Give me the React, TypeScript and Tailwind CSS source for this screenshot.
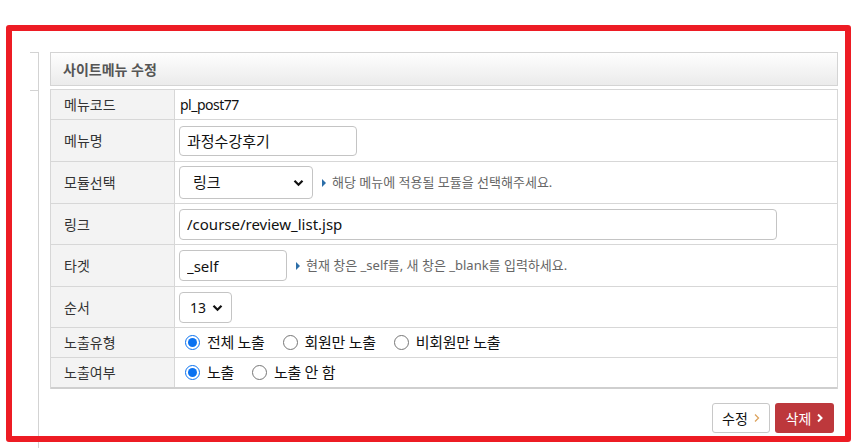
import React from 'react';

const font = { fontFamily: '"Noto Sans", "Noto Sans CJK KR", sans-serif' };

const Chevron = () => (
  <svg width="11" height="8" viewBox="0 0 11 8" className="pointer-events-none">
    <path d="M1.5 1.8 L5.5 5.8 L9.5 1.8" fill="none" stroke="#111" strokeWidth="2.2" />
  </svg>
);

const Arrow = ({ color, w }: { color: string; w: number }) => (
  <svg width="6" height="10" viewBox="0 0 6 10" className="ml-[6px]">
    <path d="M1 1.5 L4.5 5 L1 8.5" fill="none" stroke={color} strokeWidth={w} />
  </svg>
);

const Hint = ({ children }: { children: React.ReactNode }) => (
  <span className="ml-[9px] flex items-center text-[13px] text-[#666]">
    <svg width="4" height="8" viewBox="0 0 4 8" className="mr-[6px]">
      <path d="M0 0 L4 4 L0 8 Z" fill="#2c6ea8" />
    </svg>
    {children}
  </span>
);

const Row = ({ label, h, last, children }: { label: string; h: string; last?: boolean; children: React.ReactNode }) => (
  <div className={`flex ${h} ${last ? 'border-b-2 border-[#cfcfcf]' : 'border-b border-[#d7d7d7]'}`}>
    <div className="w-[124px] shrink-0 bg-[#f3f3f3] border-r border-[#d7d7d7] pl-[13px] flex items-center text-[14px] text-[#333]">
      {label}
    </div>
    <div className="flex-1 pl-[4px] flex items-center text-[14px] text-[#111]">{children}</div>
  </div>
);

const Radio = ({ name, label, checked }: { name: string; label: string; checked?: boolean }) => (
  <label className="flex items-center mr-[18px]">
    <input type="radio" name={name} defaultChecked={checked} className="w-[15px] h-[15px] m-0 accent-[#0b72f0]" />
    <span className="ml-[7px] text-[15px] tracking-[-0.3px]">{label}</span>
  </label>
);

const App: React.FC = () => {
  return (
    <div className="relative w-[857px] h-[448px] bg-white overflow-hidden" style={font}>
      <div className="flex h-full pt-[52px]">
        {/* left nav remnants */}
        <div className="w-[39px] shrink-0 border-r border-[#d3d3d3]">
          <div className="ml-[30px] h-[39px] border-y border-[#d3d3d3]" />
        </div>

        {/* main */}
        <div className="ml-[11px] w-[788px] flex flex-col">
          <div className="h-[34px] border border-[#d4d4d4] bg-gradient-to-b from-[#fefefe] to-[#ebebeb] flex items-center pl-[12px] text-[14px] font-bold text-[#555]">
            사이트메뉴 수정
          </div>

          <div className="mt-[3px] border-t border-x border-[#d7d7d7]">
            <Row label="메뉴코드" h="h-[30px]">
              <span className="ml-[1px] text-[#111] tracking-[-0.5px]">pl_post77</span>
            </Row>
            <Row label="메뉴명" h="h-[42px]">
              <input
                defaultValue="과정수강후기"
                className="w-[178px] h-[30px] border border-[#c4c4c4] rounded-[4px] px-[7px] text-[15px] text-[#111] outline-none"
              />
            </Row>
            <Row label="모듈선택" h="h-[42px]">
              <div className="relative w-[134px] h-[33px]">
                <select className="appearance-none w-full h-full border border-[#c4c4c4] rounded-[4px] pl-[13px] text-[15px] text-[#111] outline-none">
                  <option>링크</option>
                </select>
                <span className="absolute right-[9px] top-[13px]">
                  <Chevron />
                </span>
              </div>
              <Hint>해당 메뉴에 적용될 모듈을 선택해주세요.</Hint>
            </Row>
            <Row label="링크" h="h-[41px]">
              <input
                defaultValue="/course/review_list.jsp"
                className="w-[598px] h-[31px] border border-[#c4c4c4] rounded-[4px] px-[7px] text-[15px] text-[#111] outline-none"
              />
            </Row>
            <Row label="타겟" h="h-[42px]">
              <input
                defaultValue="_self"
                className="w-[108px] h-[31px] border border-[#c4c4c4] rounded-[4px] px-[7px] text-[15px] text-[#111] outline-none"
              />
              <Hint>현재 창은 _self를, 새 창은 _blank를 입력하세요.</Hint>
            </Row>
            <Row label="순서" h="h-[41px]">
              <div className="relative w-[53px] h-[31px]">
                <select className="appearance-none w-full h-full border border-[#c4c4c4] rounded-[4px] pl-[10px] text-[14px] text-[#111] outline-none">
                  <option>13</option>
                </select>
                <span className="absolute right-[9px] top-[12px]">
                  <Chevron />
                </span>
              </div>
            </Row>
            <Row label="노출유형" h="h-[30px]">
              <div className="flex items-center pl-[6px]">
                <Radio name="type" label="전체 노출" checked />
                <Radio name="type" label="회원만 노출" />
                <Radio name="type" label="비회원만 노출" />
              </div>
            </Row>
            <Row label="노출여부" h="h-[31px]" last>
              <div className="flex items-center pl-[6px]">
                <Radio name="show" label="노출" checked />
                <Radio name="show" label="노출 안 함" />
              </div>
            </Row>
          </div>

          <div className="mt-[14px] flex justify-end gap-[5px] pr-[4px]">
            <button className="h-[30px] w-[58px] border border-[#c8c8c8] rounded-[3px] bg-white text-[14px] text-[#111] flex items-center justify-center">
              수정
              <Arrow color="#dda35e" w={1.3} />
            </button>
            <button className="h-[30px] w-[59px] rounded-[3px] bg-[#bd383c] text-[14px] text-white flex items-center justify-center">
              삭제
              <Arrow color="#ffffff" w={2} />
            </button>
          </div>
        </div>
      </div>

      {/* red annotation frame */}
      <div className="absolute left-[6px] top-[25px] w-[845px] h-[417px] border-[6px] border-[#ed1c24] rounded-[3px] pointer-events-none" />
    </div>
  );
};

export default App;
